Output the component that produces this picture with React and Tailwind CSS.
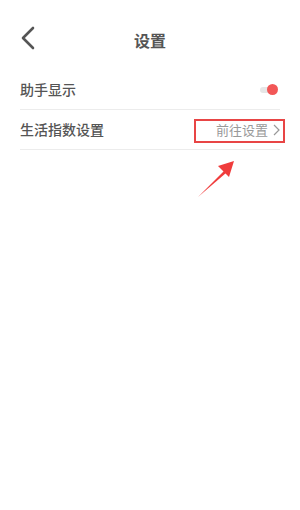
export default function App() {
  return (
    <div className="relative w-[300px] h-[510px] bg-white font-['Noto_Sans_CJK_SC',sans-serif] text-[#555]">
      {/* header */}
      <div className="relative h-[70px] pt-[10px] flex items-center justify-center">
        <svg className="absolute left-[20px] top-[26px]" width="16" height="24" viewBox="0 0 16 24">
          <path d="M13 2 L3 12 L13 22" fill="none" stroke="#555" strokeWidth="2.6" strokeLinecap="round" strokeLinejoin="round" />
        </svg>
        <h1 className="text-[16px] font-bold leading-none">设置</h1>
      </div>

      <div className="mx-5">
        <div className="h-[40px] border-b border-[#ececec] flex items-center justify-between">
          <span className="text-[14px] font-medium">助手显示</span>
          <div className="relative w-[18px] h-[10px] mr-[2px] flex items-center">
            <div className="w-[14px] h-[6px] rounded-full bg-[#e6e6e6]" />
            <div className="absolute right-0 w-[11px] h-[11px] rounded-full bg-[#f25757]" />
          </div>
        </div>

        <div className="relative h-[40px] border-b border-[#ececec] flex items-center justify-between">
          <span className="text-[14px] font-medium">生活指数设置</span>
          <div className="flex items-center gap-[5px] text-[13px] text-[#999]">
            <span>前往设置</span>
            <svg width="7" height="12" viewBox="0 0 7 12">
              <path d="M1 1 L6 6 L1 11" fill="none" stroke="#999" strokeWidth="1.2" />
            </svg>
          </div>
          <div className="absolute left-[174px] top-[9px] w-[91px] h-[24px] border-2 border-[#e84545]" />
        </div>
      </div>

      {/* annotation arrow */}
      <svg className="absolute left-[194px] top-[155px]" width="46" height="46" viewBox="0 0 46 46">
        <path d="M4 42 L30 16 L32 18 Z" fill="#f03c3c" />
        <path d="M40 6 L24 11 L35 22 Z" fill="#f03c3c" />
      </svg>
    </div>
  )
}
